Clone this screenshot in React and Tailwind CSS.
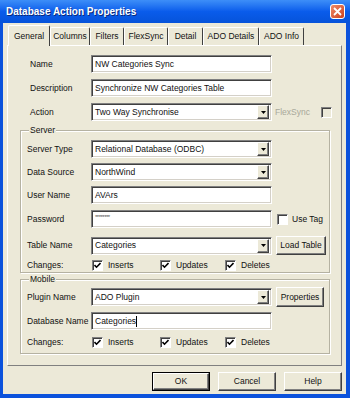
const raised =
  "bg-[#ECE9D8] border border-t-white border-l-white border-r-[#404040] border-b-[#404040] shadow-[inset_-1px_-1px_0_#808080]";
const sunken =
  "bg-white border border-t-[#808080] border-l-[#808080] border-r-white border-b-white shadow-[inset_1px_1px_0_#404040,inset_-1px_-1px_0_#d4d0c8]";

const TextBox = ({ value, cursor, masked }) => (
  <div className={`${sunken} w-[181px] h-[18px] flex items-center pl-[3px]`}>
    <span className={masked ? "text-[6px] tracking-[-0.5px] text-[#555] -mt-[5px]" : ""}>{value}</span>
    {cursor && <span className="w-px h-[11px] bg-black" />}
  </div>
);

const Select = ({ value }) => (
  <div className={`${sunken} w-[181px] h-[18px] flex items-center pl-[3px] pr-[2px]`}>
    <span className="flex-1">{value}</span>
    <div className={`${raised} w-[12px] h-[14px] flex items-center justify-center`}>
      <svg width="5" height="3" viewBox="0 0 5 3">
        <path d="M0 0 H5 L2.5 3 Z" fill="#000" />
      </svg>
    </div>
  </div>
);

const Check = ({ checked, disabled }) => (
  <div
    className={`w-[11px] h-[11px] shrink-0 flex items-center justify-center border border-t-[#808080] border-l-[#808080] border-r-white border-b-white shadow-[inset_1px_1px_0_#404040] ${
      disabled ? "bg-[#ECE9D8]" : "bg-white"
    }`}
  >
    {checked && (
      <svg width="7" height="7" viewBox="0 0 7 7">
        <path d="M0.5 3 L2.5 5.2 L6.5 1" stroke="#000" strokeWidth="1.6" fill="none" />
      </svg>
    )}
  </div>
);

const Button = ({ label, className = "" }) => (
  <div className={`${raised} h-[19px] flex items-center justify-center ${className}`}>{label}</div>
);

const Row = ({ label, labelW, children, className = "" }) => (
  <div className={`flex items-center ${className}`}>
    <span style={{ width: labelW }} className="shrink-0">
      {label}
    </span>
    {children}
  </div>
);

const Changes = ({ className = "" }) => (
  <div className={`flex items-center h-[12px] ${className}`}>
    <span className="w-[65px] shrink-0">Changes:</span>
    <div className="w-[68px] flex items-center">
      <Check checked />
      <span className="ml-[5px]">Inserts</span>
    </div>
    <div className="w-[65px] flex items-center">
      <Check checked />
      <span className="ml-[5px]">Updates</span>
    </div>
    <div className="flex items-center">
      <Check checked />
      <span className="ml-[5px]">Deletes</span>
    </div>
  </div>
);

const GroupBox = ({ title, className = "", children }) => (
  <div
    className={`relative ml-[12px] w-[310px] border border-[#b5b2a2] shadow-[inset_1px_1px_0_#fff,1px_1px_0_#fff] pl-[6px] ${className}`}
  >
    <span className="absolute left-[8px] -top-[6px] px-[1px] leading-[10px] bg-[#ECE9D8]">{title}</span>
    {children}
  </div>
);

const tabs = [
  { name: "General", w: 42 },
  { name: "Columns", w: 40 },
  { name: "Filters", w: 34 },
  { name: "FlexSync", w: 44 },
  { name: "Detail", w: 35 },
  { name: "ADO Details", w: 56 },
  { name: "ADO Info", w: 45 },
];

export default function App() {
  return (
    <div className="w-[350px] h-[398px] bg-[#0B52DC] flex flex-col font-['Liberation_Sans',Arial,sans-serif] text-[8.5px] text-[#111] leading-none">
      {/* Title bar */}
      <div className="h-[23px] shrink-0 flex items-center justify-between pl-[6px] pr-[5px] bg-gradient-to-b from-[#3D8EF8] via-[#0A5CEB] to-[#0653DA]">
        <span className="text-white font-bold text-[10px] [text-shadow:1px_1px_0_#0A2A7A]">
          Database Action Properties
        </span>
        <div className="w-[15px] h-[15px] rounded-[3px] border border-white bg-gradient-to-br from-[#EE8A68] to-[#CC3F1A] flex items-center justify-center">
          <svg width="9" height="9" viewBox="0 0 9 9">
            <path d="M1 1 L8 8 M8 1 L1 8" stroke="#fff" strokeWidth="1.8" />
          </svg>
        </div>
      </div>

      {/* Body */}
      <div className="flex-1 ml-[3px] mr-[4px] mb-[4px] bg-[#ECE9D8] flex flex-col">
        {/* Tabs */}
        <div className="mt-[2px] h-[20px] pl-[5px] flex items-end">
          {tabs.map((t, i) => (
            <div
              key={t.name}
              style={{ width: t.w }}
              className={`flex items-center justify-center border-t border-l border-r border-t-white border-l-white border-r-[#404040] rounded-t-[2px] ${
                i === 0 ? "h-[21px] -mb-px relative z-10 bg-[#ECE9D8]" : "h-[18px]"
              }`}
            >
              {t.name}
            </div>
          ))}
        </div>

        {/* Panel */}
        <div className="ml-[4px] w-[335px] h-[321px] border border-t-white border-l-white border-r-[#808080] border-b-[#808080] flex flex-col">
          <div className="pt-[9px] pl-[22px] flex flex-col gap-[6px]">
            <Row label="Name" labelW={61} className="h-[18px]">
              <TextBox value="NW Categories Sync" />
            </Row>
            <Row label="Description" labelW={61} className="h-[18px]">
              <TextBox value="Synchronize NW Categories Table" />
            </Row>
            <Row label="Action" labelW={61} className="h-[18px]">
              <Select value="Two Way Synchronise" />
              <span className="ml-[3px] text-[#A8A89A]">FlexSync</span>
              <div className="ml-[11px]">
                <Check disabled />
              </div>
            </Row>
          </div>

          {/* Server */}
          <GroupBox title="Server" className="mt-[9px] pt-[9px] pb-[1px]">
            <Row label="Server Type" labelW={64} className="h-[18px]">
              <Select value="Relational Database (ODBC)" />
            </Row>
            <Row label="Data Source" labelW={64} className="h-[18px] mt-[5px]">
              <Select value="NorthWind" />
            </Row>
            <Row label="User Name" labelW={64} className="h-[18px] mt-[5px]">
              <TextBox value="AVArs" />
            </Row>
            <Row label="Password" labelW={64} className="h-[18px] mt-[6px]">
              <TextBox value="********" masked />
              <div className="ml-[5px]">
                <Check />
              </div>
              <span className="ml-[4px]">Use Tag</span>
            </Row>
            <Row label="Table Name" labelW={64} className="h-[19px] mt-[8px]">
              <Select value="Categories" />
              <Button label="Load Table" className="ml-[4px] w-[50px]" />
            </Row>
            <Changes className="mt-[4px]" />
          </GroupBox>

          {/* Mobile */}
          <GroupBox title="Mobile" className="mt-[6px] pt-[7px] pb-[5px]">
            <Row label="Plugin Name" labelW={64} className="h-[20px]">
              <Select value="ADO Plugin" />
              <Button label="Properties" className="ml-[4px] w-[48px] h-[20px]" />
            </Row>
            <Row label="Database Name" labelW={64} className="h-[18px] mt-[5px]">
              <TextBox value="Categories" cursor />
            </Row>
            <Changes className="mt-[6px]" />
          </GroupBox>
        </div>

        {/* Dialog buttons */}
        <div className="mt-[6px] mr-[4px] flex justify-end gap-[8px]">
          <div className="w-[58px] h-[19px] border border-black flex">
            <Button label="OK" className="flex-1 h-full" />
          </div>
          <Button label="Cancel" className="w-[58px]" />
          <Button label="Help" className="w-[58px]" />
        </div>
      </div>
    </div>
  );
}
